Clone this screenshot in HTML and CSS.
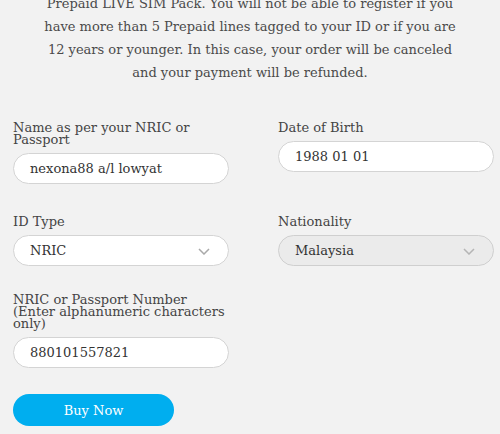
FILE: index.html
```html
<!DOCTYPE html>
<html>
<head>
<meta charset="utf-8">
<link rel="stylesheet" href="styles.css">
</head>
<body>
<div class="page">
  <p class="notice">Prepaid LIVE SIM Pack. You will not be able to register if you have more than 5 Prepaid lines tagged to your ID or if you are 12 years or younger. In this case, your order will be canceled and your payment will be refunded.</p>
  <form class="form">
    <div class="row row-1">
      <div class="field">
        <label class="label">Name as per your NRIC or Passport</label>
        <div class="input">nexona88 a/l lowyat</div>
      </div>
      <div class="field">
        <label class="label">Date of Birth</label>
        <div class="input">1988 01 01</div>
      </div>
    </div>
    <div class="row row-2">
      <div class="field">
        <label class="label">ID Type</label>
        <div class="input select">NRIC
          <svg class="chev" width="12" height="7" viewBox="0 0 12 7"><path d="M1 1 L6 6 L11 1" fill="none" stroke="#a9a9a9" stroke-width="1.5"/></svg>
        </div>
      </div>
      <div class="field">
        <label class="label">Nationality</label>
        <div class="input select disabled">Malaysia
          <svg class="chev" width="12" height="7" viewBox="0 0 12 7"><path d="M1 1 L6 6 L11 1" fill="none" stroke="#b5b5b5" stroke-width="1.5"/></svg>
        </div>
      </div>
    </div>
    <div class="row row-3">
      <div class="field">
        <label class="label">NRIC or Passport Number (Enter alphanumeric characters only)</label>
        <div class="input">880101557821</div>
      </div>
    </div>
    <button type="button" class="buy">Buy Now</button>
  </form>
</div>
</body>
</html>
```

FILE: styles.css
```css
html, body {
  margin: 0;
  padding: 0;
  background: #f2f2f2;
  overflow: hidden;
}
.page {
  font-family: "DejaVu Serif", serif;
  color: #444;
}
.notice {
  width: 424px;
  margin: -8px auto 0;
  text-align: center;
  font-size: 13px;
  line-height: 23px;
  color: #4a4a4a;
}
.form {
  padding: 38px 6px 0 13px;
}
.row {
  display: grid;
  grid-template-columns: 216px 216px;
  column-gap: 49px;
  align-items: start;
}
.row-1 { margin-bottom: 32px; }
.row-2 { margin-bottom: 28px; }
.row-3 { margin-bottom: 26px; }
.field {
  display: flex;
  flex-direction: column;
}
.label {
  display: block;
  font-size: 13px;
  line-height: 12px;
  color: #444;
  margin-bottom: 7px;
}
.input {
  position: relative;
  box-sizing: border-box;
  height: 31px;
  border: 1px solid #d4d4d4;
  border-radius: 16px;
  background: #fff;
  padding: 0 16px;
  display: flex;
  align-items: center;
  font-size: 13px;
  color: #333;
}
.input.disabled {
  background: #ebebeb;
  border-color: #cfcfcf;
}
.chev {
  position: absolute;
  right: 18px;
  top: 12px;
}
.buy {
  display: block;
  width: 161px;
  height: 32px;
  border: none;
  border-radius: 16px;
  background: #00aeef;
  color: #fff;
  font-family: "DejaVu Serif", serif;
  font-size: 13px;
  padding: 0;
}
```
